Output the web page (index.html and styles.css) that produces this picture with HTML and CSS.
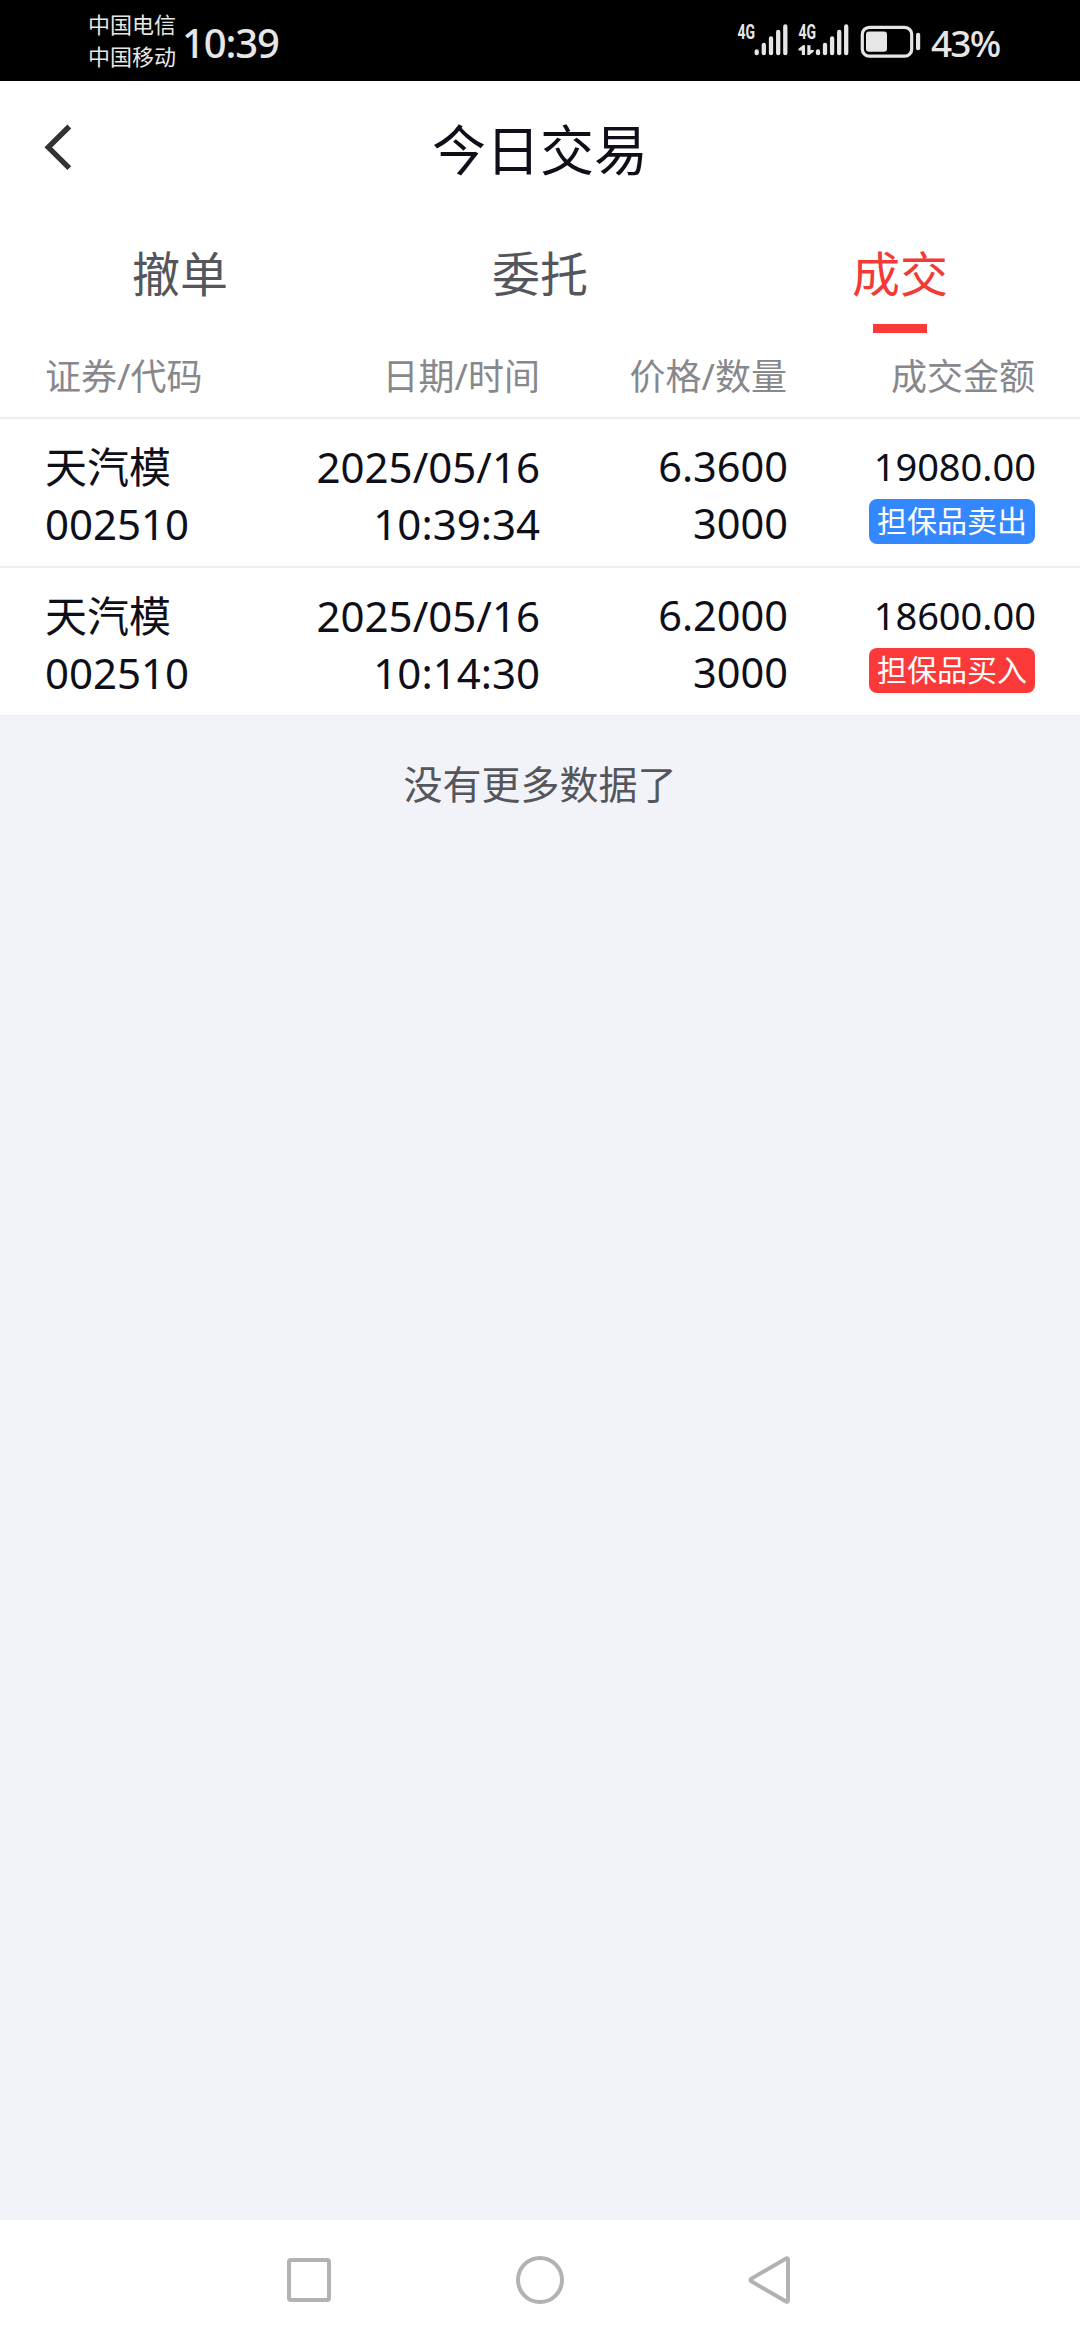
FILE: index.html
```html
<!DOCTYPE html>
<html lang="zh-CN">
<head>
<meta charset="utf-8">
<title>今日交易</title>
<link rel="stylesheet" href="styles.css">
</head>
<body>
<div class="status">
  <div class="carriers"><span>中国电信</span><span>中国移动</span></div>
  <div class="clock">10:39</div>
  <svg class="indicators" width="192" height="81" viewBox="732 0 192 81">
    <g class="net">
      <text x="737.5" y="38.7" textLength="17.5" lengthAdjust="spacingAndGlyphs">4G</text>
      <text x="798.5" y="38.7" textLength="17.5" lengthAdjust="spacingAndGlyphs">4G</text>
    </g>
    <g class="bars">
      <path d="M756.7 51.5v1.7M763.8 44.8v8.4M771 38.5v14.7M778.2 32v21.2M785.3 26.5v26.7"/>
      <path d="M818 51.5v1.7M825 44.8v8.4M832.1 38.5v14.7M839.2 32v21.2M846.2 26.5v26.7"/>
    </g>
    <path class="solid" d="M805 45.3V55h-3.2v-4.6h-3.3v-1.6l4.4-3.5zM807.3 45.3h3.2v4.6h3.3v1.6l-4.4 3.5h-2.1z"/>
    <rect class="shell" x="862.3" y="27.3" width="49.4" height="28.9" rx="7"/>
    <rect class="solid" x="866" y="31.5" width="21" height="20.3" rx="3"/>
    <rect class="solid" x="916" y="32.7" width="4.2" height="17.5" rx="2"/>
  </svg>
  <div class="percent">43%</div>
</div>
<header class="titlebar">
  <svg class="back" width="60" height="60" viewBox="0 0 60 60"><path d="M40.3 9.5 19.3 30.3l21 20.8"/></svg>
  <h1>今日交易</h1>
</header>
<nav class="tabs">
  <div class="tab">撤单</div>
  <div class="tab">委托</div>
  <div class="tab active">成交</div>
</nav>
<div class="grid head">
  <span>证券/代码</span><span>日期/时间</span><span>价格/数量</span><span>成交金额</span>
</div>
<main>
  <div class="grid row">
    <div><p>天汽模</p><p>002510</p></div>
    <div><p>2025/05/16</p><p>10:39:34</p></div>
    <div class="price"><p>6.3600</p><p>3000</p></div>
    <div class="total"><p>19080.00</p><span class="badge sell">担保品卖出</span></div>
  </div>
  <div class="grid row">
    <div><p>天汽模</p><p>002510</p></div>
    <div><p>2025/05/16</p><p>10:14:30</p></div>
    <div class="price"><p>6.2000</p><p>3000</p></div>
    <div class="total"><p>18600.00</p><span class="badge buy">担保品买入</span></div>
  </div>
  <div class="end">没有更多数据了</div>
</main>
<footer class="navbar">
  <svg width="48" height="48" viewBox="0 0 48 48"><rect x="4" y="4" width="40" height="40" rx="2"/></svg>
  <svg width="48" height="48" viewBox="0 0 48 48"><circle cx="24" cy="24" r="22"/></svg>
  <svg width="48" height="48" viewBox="0 0 48 48"><path d="M39.2 2.4 4.1 22.8a1.6 1.6 0 0 0 0 2.4l35.1 20.4q1.8.6 1.8-1.4V3.8q0-2-1.8-1.4z"/></svg>
</footer>
</body>
</html>
```

FILE: styles.css
```css
* { box-sizing: border-box; margin: 0; padding: 0; }
body {
  width: 1080px;
  height: 2340px;
  display: flex;
  flex-direction: column;
  background: #fff;
  color: #0e0f19;
  font-family: "Noto Sans", "Noto Sans CJK SC", sans-serif;
}

.status {
  height: 81px;
  background: #000;
  color: #e6e6e6;
  display: flex;
  align-items: center;
  padding-left: 88px;
}
.carriers {
  display: flex;
  flex-direction: column;
  width: 94px;
  padding-bottom: 3px;
  font: 22px/32px "Noto Sans CJK SC", sans-serif;
}
.clock { width: 100px; font-size: 40px; font-weight: 500; letter-spacing: -1.1px; line-height: 81px; padding-top: 4px; }
.indicators { margin-left: auto; }
.percent { width: 156px; padding: 4px 0 0 7px; font-size: 37px; font-weight: 500; letter-spacing: -1.8px; line-height: 76px; }
.net { font: 700 20px Roboto, sans-serif; fill: #e6e6e6; }
.bars { fill: none; stroke: #e6e6e6; stroke-width: 4.3; stroke-linecap: round; }
.solid { fill: #e6e6e6; }
.shell { fill: none; stroke: #e6e6e6; stroke-width: 3.2; }

.titlebar {
  height: 135px;
  display: grid;
  grid-template-columns: 120px 1fr 120px;
  align-items: center;
  padding-bottom: 3px;
}
.back { margin-left: 29px; fill: none; stroke: #333; stroke-width: 5.4; }
h1 { padding-top: 5px; font-size: 54px; font-weight: 400; line-height: 80px; text-align: center; }

.tabs { height: 117px; display: flex; }
.tab {
  flex: 1;
  display: flex;
  flex-direction: column;
  align-items: center;
  justify-content: space-between;
  font-size: 48px;
  line-height: 116px;
  color: #55565c;
}
.active { color: #f23a39; }
.active::after { content: ""; width: 54px; height: 9px; margin-top: -8px; background: #fc3939; }

.grid {
  display: grid;
  grid-template-columns: 200px 295px 247px 248px;
  padding: 0 45px;
  text-align: right;
}
.grid > :first-child { text-align: left; }
.head { height: 86px; border-bottom: 2px solid #eee; font-size: 36px; line-height: 87px; color: #88888c; }

main { flex: 1; background: #f2f3f8; }
.row { height: 149px; padding-top: 19px; background: #fff; border-bottom: 2px solid #eee; font-size: 42px; line-height: 57px; }
.row + .row { height: 148px; border-bottom-width: 1px; }
.price { font-size: 41.5px; margin-right: -1px; }
.total { display: flex; flex-direction: column; align-items: flex-end; font-size: 38px; }
.total p { margin-right: -1px; }
.badge {
  height: 45px;
  margin-top: 4px;
  padding: 0 8px;
  border-radius: 8px;
  color: #fff;
  font-size: 30px;
  line-height: 43px;
}
.sell { background: #3388ff; }
.buy { background: #fc3939; }
.end { padding-top: 39px; text-align: center; font-size: 39px; line-height: 58px; color: #55565c; }

.navbar { height: 120px; display: flex; justify-content: center; gap: 183px; align-items: center; }
.navbar svg { fill: none; stroke: #b2b2b2; stroke-width: 4; }
```
